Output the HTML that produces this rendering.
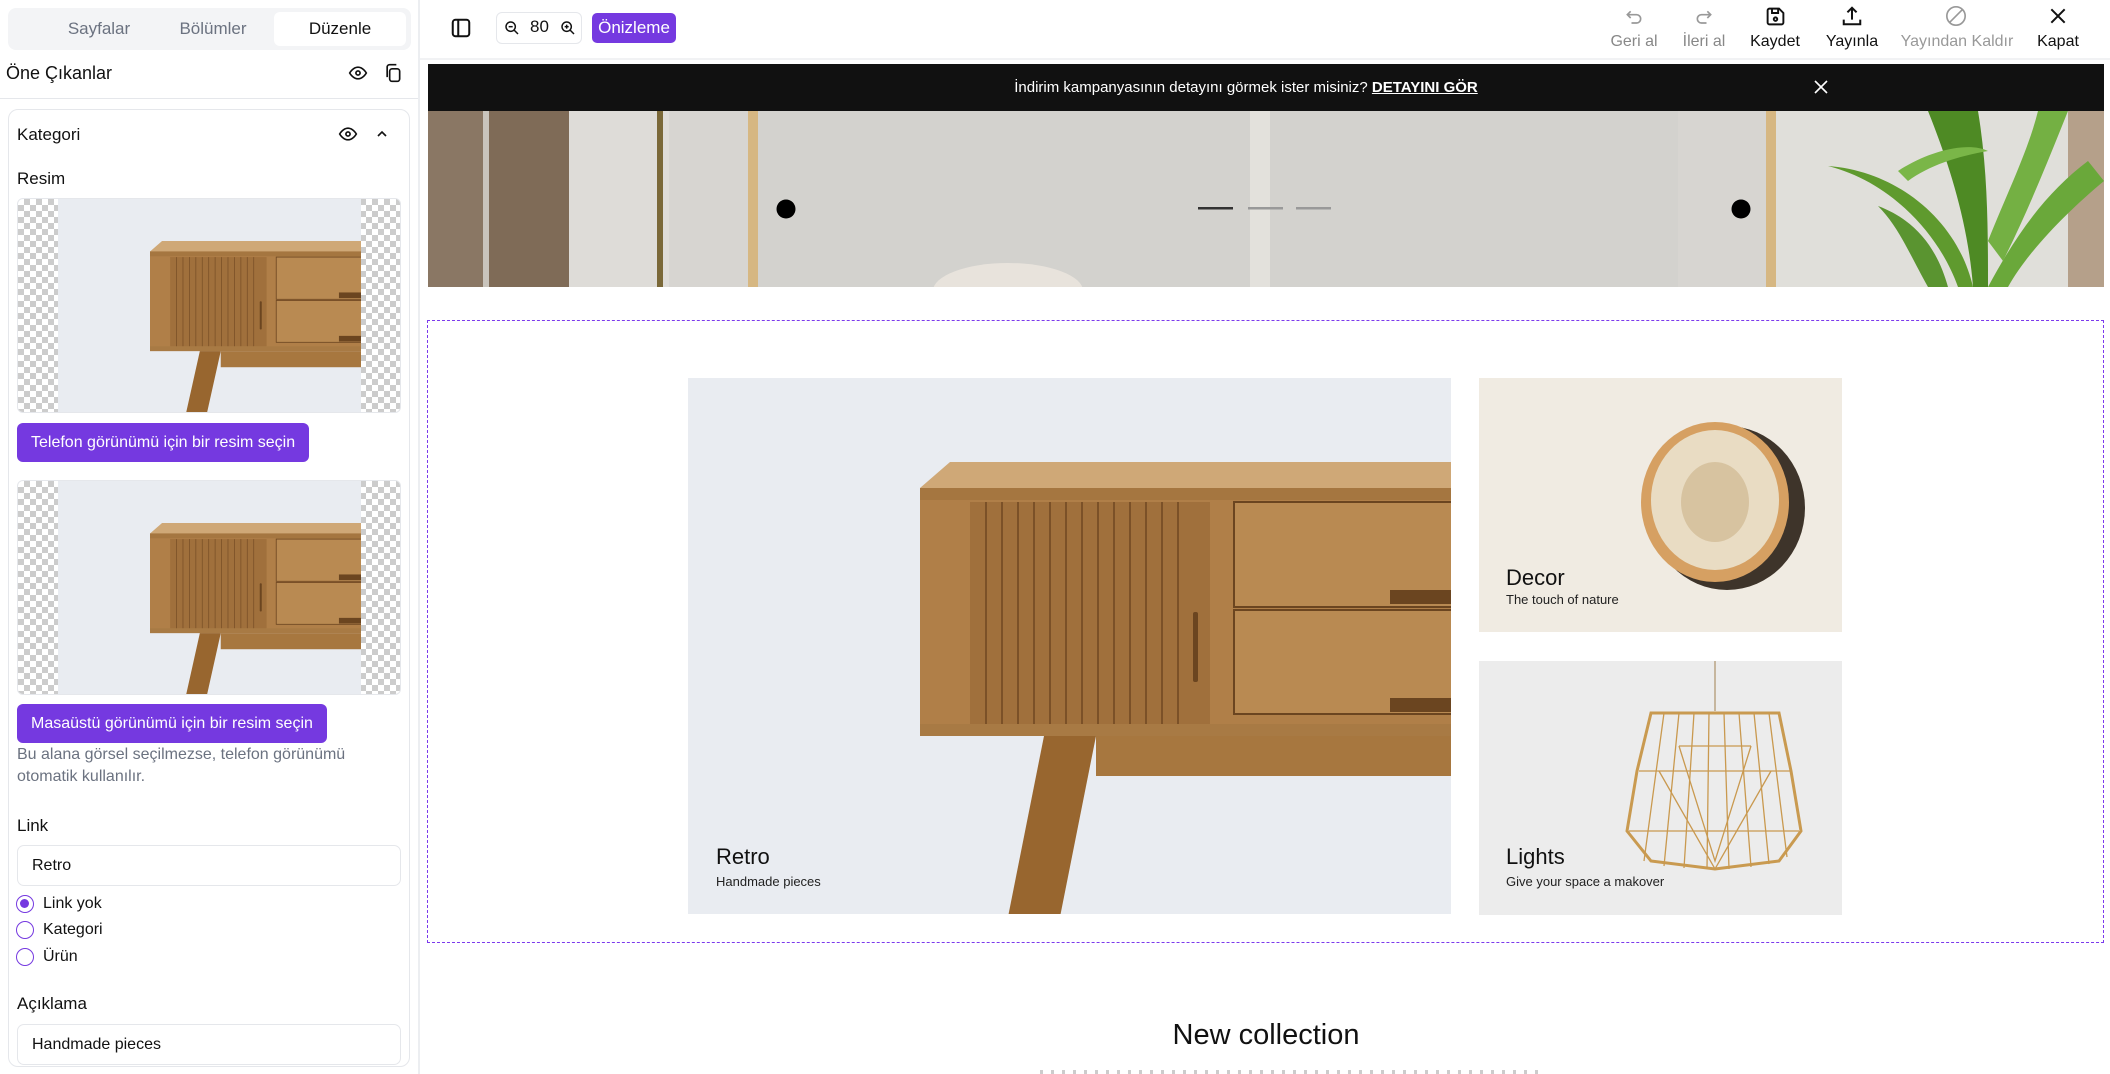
<!DOCTYPE html>
<html style="overflow:hidden;width:2110px;height:1074px"><head><meta charset="utf-8">
<style>
*{box-sizing:border-box;margin:0;padding:0}
body{width:2110px;height:1074px;overflow:hidden;background:#fff;font-family:"Liberation Sans",sans-serif;color:#111;position:relative}
.abs{position:absolute}
.side{left:0;top:0;width:420px;height:1074px;border-right:2px solid #eceef1;background:#fff;overflow:hidden}
.tabs{left:8px;top:8px;width:403px;height:42px;background:#f3f4f6;border-radius:8px}
.tab{position:absolute;top:4px;height:34px;line-height:34px;text-align:center;font-size:17px;color:#6b7280;width:130px}
.card{left:8px;top:109px;width:402px;height:958px;border:1px solid #e5e7eb;border-radius:10px}
.lbl{font-size:17px;color:#111}
.thumb{left:17px;width:384px;height:215px;border-radius:6px;overflow:hidden;border:1px solid #e5e7eb;
background-color:#fff;background-image:linear-gradient(45deg,#ccc 25%,transparent 25%,transparent 75%,#ccc 75%),linear-gradient(45deg,#ccc 25%,transparent 25%,transparent 75%,#ccc 75%);background-size:12px 12px;background-position:0 0,6px 6px}
.thumb .mid{position:absolute;left:40px;top:0;width:303px;height:100%;background:#e9ecf1;overflow:hidden}
.btn{background:#7539e0;color:#fff;font-size:16px;border-radius:6px;height:39px;line-height:39px;padding:0 14px;left:17px}
.inp{left:17px;width:384px;height:41px;border:1px solid #e5e7eb;border-radius:7px;font-size:16px;line-height:39px;padding-left:14px}
.radio{left:16px;width:18px;height:18px;border:1.5px solid #7539e0;border-radius:50%}
.rl{left:43px;font-size:16px}
.tb{font-size:16px;text-align:center;width:120px}
.top{left:420px;top:0;width:1690px;height:60px;border-bottom:2px solid #f1f2f4}
</style></head><body>
<div class="abs side">
  <div class="abs tabs">
    <div class="tab" style="left:26px">Sayfalar</div>
    <div class="tab" style="left:140px">Bölümler</div>
    <div class="tab" style="left:266px;background:#fff;border-radius:6px;color:#111;width:132px">Düzenle</div>
  </div>
  <div class="abs" style="left:6px;top:60px;font-size:18px;line-height:26px">Öne Çıkanlar</div>
  <svg class="abs" style="left:348px;top:63px" width="20" height="20" viewBox="0 0 24 24" fill="none" stroke="#111" stroke-width="2"><path d="M2 12s4-7 10-7 10 7 10 7-4 7-10 7S2 12 2 12z"/><circle cx="12" cy="12" r="2.5"/></svg>
  <svg class="abs" style="left:383px;top:62px" width="20" height="22" viewBox="0 0 24 24" fill="none" stroke="#111" stroke-width="2"><rect x="8" y="7" width="12" height="15" rx="3"/><path d="M5 17V5a3 3 0 0 1 3-3h8"/></svg>
  <div class="abs" style="left:0;top:98px;width:418px;height:1px;background:#e5e7eb"></div>
  <div class="abs card"></div>
  <div class="abs lbl" style="left:17px;top:125px">Kategori</div>
  <svg class="abs" style="left:338px;top:124px" width="20" height="20" viewBox="0 0 24 24" fill="none" stroke="#111" stroke-width="2"><path d="M2 12s4-7 10-7 10 7 10 7-4 7-10 7S2 12 2 12z"/><circle cx="12" cy="12" r="2.5"/></svg>
  <svg class="abs" style="left:374px;top:126px" width="16" height="16" viewBox="0 0 24 24" fill="none" stroke="#111" stroke-width="2.5"><path d="M6 15l6-6 6 6"/></svg>
  <div class="abs lbl" style="left:17px;top:169px">Resim</div>
  <div class="abs thumb" style="top:198px"><div class="mid">
    <svg width="303" height="215" viewBox="0 0 303 215"><g transform="translate(92,42) scale(0.402)"><use href="#sb"/><polygon points="124,274 176,274 139,440 87,440" fill="#98662f"/></g></svg></div></div>
  <div class="abs btn" style="top:423px">Telefon görünümü için bir resim seçin</div>
  <div class="abs thumb" style="top:480px"><div class="mid">
    <svg width="303" height="215" viewBox="0 0 303 215"><g transform="translate(92,42) scale(0.402)"><use href="#sb"/><polygon points="124,274 176,274 139,440 87,440" fill="#98662f"/></g></svg></div></div>
  <div class="abs btn" style="top:704px">Masaüstü görünümü için bir resim seçin</div>
  <div class="abs" style="left:17px;top:744px;font-size:16px;line-height:22px;color:#6b7280;width:360px">Bu alana görsel seçilmezse, telefon görünümü otomatik kullanılır.</div>
  <div class="abs lbl" style="left:17px;top:816px">Link</div>
  <div class="abs inp" style="top:845px">Retro</div>
  <div class="abs radio" style="top:895px"><div style="position:absolute;left:3px;top:3px;width:9px;height:9px;border-radius:50%;background:#7539e0"></div></div>
  <div class="abs rl" style="top:895px">Link yok</div>
  <div class="abs radio" style="top:921px"></div><div class="abs rl" style="top:921px">Kategori</div>
  <div class="abs radio" style="top:948px"></div><div class="abs rl" style="top:948px">Ürün</div>
  <div class="abs lbl" style="left:17px;top:994px">Açıklama</div>
  <div class="abs inp" style="top:1024px">Handmade pieces</div>
</div>

<svg width="0" height="0" style="position:absolute"><defs>
<g id="sb">
  <polygon points="0,26 30,0 540,0 540,26" fill="#cfa877"/>
  <rect x="0" y="26" width="540" height="246" fill="#b07f48"/>
  <rect x="0" y="26" width="540" height="12" fill="#a57640"/>
  <rect x="50" y="40" width="240" height="222" fill="#a0703c"/>
  <g stroke="#7b5128" stroke-width="2">
    <line x1="66" y1="40" x2="66" y2="262"/><line x1="82" y1="40" x2="82" y2="262"/><line x1="98" y1="40" x2="98" y2="262"/><line x1="114" y1="40" x2="114" y2="262"/><line x1="130" y1="40" x2="130" y2="262"/><line x1="146" y1="40" x2="146" y2="262"/><line x1="162" y1="40" x2="162" y2="262"/><line x1="178" y1="40" x2="178" y2="262"/><line x1="194" y1="40" x2="194" y2="262"/><line x1="210" y1="40" x2="210" y2="262"/><line x1="226" y1="40" x2="226" y2="262"/><line x1="242" y1="40" x2="242" y2="262"/><line x1="258" y1="40" x2="258" y2="262"/>
  </g>
  <rect x="273" y="150" width="5" height="70" rx="2" fill="#6b4520"/>
  <rect x="314" y="40" width="226" height="105" fill="#b98a52" stroke="#6b4520" stroke-width="2"/>
  <rect x="314" y="148" width="226" height="104" fill="#b98a52" stroke="#6b4520" stroke-width="2"/>
  <rect x="470" y="128" width="70" height="14" fill="#6b4520"/>
  <rect x="470" y="236" width="70" height="14" fill="#6b4520"/>
  <rect x="0" y="262" width="540" height="12" fill="#a87a44"/>
  <rect x="176" y="274" width="364" height="40" fill="#a7773f"/>
</g>
</defs></svg>

<div class="abs top">
  <svg class="abs" style="left:30px;top:17px" width="22" height="22" viewBox="0 0 24 24" fill="none" stroke="#111" stroke-width="2.2"><rect x="3" y="3" width="18" height="18" rx="3"/><line x1="9" y1="3" x2="9" y2="21"/></svg>
  <div class="abs" style="left:76px;top:12px;width:86px;height:32px;border:1px solid #e5e7eb;border-radius:6px"></div>
  <svg class="abs" style="left:84px;top:20px" width="16" height="16" viewBox="0 0 24 24" fill="none" stroke="#111" stroke-width="2.2"><circle cx="10" cy="10" r="7"/><line x1="15" y1="15" x2="21" y2="21"/><line x1="7" y1="10" x2="13" y2="10"/></svg>
  <div class="abs" style="left:110px;top:17px;font-size:17px">80</div>
  <svg class="abs" style="left:140px;top:20px" width="16" height="16" viewBox="0 0 24 24" fill="none" stroke="#111" stroke-width="2.2"><circle cx="10" cy="10" r="7"/><line x1="15" y1="15" x2="21" y2="21"/><line x1="7" y1="10" x2="13" y2="10"/><line x1="10" y1="7" x2="10" y2="13"/></svg>
  <div class="abs" style="left:172px;top:13px;width:84px;height:30px;background:#7539e0;border-radius:5px;color:#fff;font-size:17px;line-height:30px;text-align:center">Önizleme</div>
</div>
<!-- right toolbar -->
<svg class="abs" style="left:1624px;top:8px" width="20" height="20" viewBox="0 0 24 24" fill="none" stroke="#999" stroke-width="2"><path d="M8 4L4 8l4 4"/><path d="M4 8h11a5 5 0 0 1 0 10H9"/></svg>
<div class="abs tb" style="left:1574px;top:33px;color:#888">Geri al</div>
<svg class="abs" style="left:1694px;top:8px" width="20" height="20" viewBox="0 0 24 24" fill="none" stroke="#999" stroke-width="2"><path d="M16 4l4 4-4 4"/><path d="M20 8H9a5 5 0 0 0 0 10h6"/></svg>
<div class="abs tb" style="left:1644px;top:33px;color:#888">İleri al</div>
<svg class="abs" style="left:1765px;top:6px" width="21" height="21" viewBox="0 0 24 24" fill="none" stroke="#111" stroke-width="2.2"><path d="M5 3h11l5 5v11a2 2 0 0 1-2 2H5a2 2 0 0 1-2-2V5a2 2 0 0 1 2-2z"/><path d="M8 3v5h7V3"/><circle cx="12" cy="15" r="2"/></svg>
<div class="abs tb" style="left:1715px;top:33px">Kaydet</div>
<svg class="abs" style="left:1841px;top:5px" width="22" height="22" viewBox="0 0 24 24" fill="none" stroke="#111" stroke-width="2.2"><path d="M12 16V3M7 8l5-5 5 5"/><path d="M3 16v5h18v-5"/></svg>
<div class="abs tb" style="left:1792px;top:33px">Yayınla</div>
<svg class="abs" style="left:1945px;top:5px" width="22" height="22" viewBox="0 0 24 24" fill="none" stroke="#999" stroke-width="1.8"><circle cx="12" cy="12" r="10"/><line x1="5" y1="19" x2="19" y2="5"/></svg>
<div class="abs tb" style="left:1887px;top:33px;width:140px;color:#999">Yayından Kaldır</div>
<svg class="abs" style="left:2048px;top:6px" width="20" height="20" viewBox="0 0 24 24" fill="none" stroke="#111" stroke-width="2.4"><path d="M4 4l16 16M20 4L4 20"/></svg>
<div class="abs tb" style="left:1998px;top:33px">Kapat</div>

<!-- announcement -->
<div class="abs" style="left:428px;top:64px;width:1676px;height:47px;background:#111;color:#fff;font-size:15px;line-height:47px;text-align:center">
  <span style="position:relative;left:-20px">İndirim kampanyasının detayını görmek ister misiniz? <b style="text-decoration:underline">DETAYINI GÖR</b></span>
</div>
<svg class="abs" style="left:1814px;top:80px" width="14" height="14" viewBox="0 0 14 14" stroke="#fff" stroke-width="1.6"><path d="M1 1l12 12M13 1L1 13"/></svg>

<!-- hero -->
<svg class="abs" style="left:428px;top:111px" width="1676" height="176" viewBox="0 0 1676 176">
  <rect width="1676" height="176" fill="#d7d5d1"/>
  <rect x="0" width="55" height="176" fill="#8a7764"/>
  <rect x="55" width="6" height="176" fill="#c9c4bc"/>
  <rect x="61" width="80" height="176" fill="#7f6b57"/>
  <rect x="141" width="100" height="176" fill="#dedcd8"/>
  <rect x="229" width="6" height="176" fill="#7a6838"/>
  <rect x="320" width="10" height="176" fill="#d6b782"/>
  <rect x="330" width="920" height="176" fill="#d3d2ce"/>
  <rect x="822" width="20" height="176" fill="#e3e1dc"/>
  <rect x="1338" width="10" height="176" fill="#d6b782"/>
  <rect x="1348" width="328" height="176" fill="#e0dfda"/>
  <rect x="1640" width="36" height="176" fill="#b5a08a"/>
  <ellipse cx="580" cy="180" rx="75" ry="28" fill="#e8e3dc"/>
  <g>
    <path d="M1530 176 C1510 120 1460 70 1400 55 C1470 60 1530 110 1545 176z" fill="#5f9a2e"/>
    <path d="M1545 176 C1540 110 1520 50 1500 0 L1550 0 C1560 60 1560 120 1560 176z" fill="#4e8a24"/>
    <path d="M1560 176 C1590 120 1620 80 1660 50 L1676 70 C1640 100 1600 140 1580 176z" fill="#6aa83a"/>
    <path d="M1560 130 C1580 80 1600 40 1610 0 L1640 0 C1620 50 1600 100 1575 150z" fill="#74b043"/>
    <path d="M1500 176 C1480 140 1470 115 1450 95 C1490 110 1510 140 1520 176z" fill="#5a9430"/>
    <path d="M1470 60 C1500 40 1540 30 1560 40 C1530 45 1500 55 1480 70z" fill="#7ab648"/>
  </g>
  <circle cx="358" cy="98" r="9.5" fill="#000"/>
  <circle cx="1313" cy="98" r="9.5" fill="#000"/>
  <rect x="770" y="96" width="35" height="2.5" fill="#333"/>
  <rect x="820" y="96" width="35" height="2.5" fill="#999"/>
  <rect x="868" y="96" width="35" height="2.5" fill="#999"/>
</svg>

<!-- selected section -->
<div class="abs" style="left:427px;top:320px;width:1677px;height:623px;border:1.5px dashed #7c3aed"></div>
<div class="abs" style="left:688px;top:378px;width:763px;height:536px;background:#e9ecf1;overflow:hidden">
  <svg width="763" height="536" viewBox="0 0 763 536"><g transform="translate(232,84)"><use href="#sb"/><polygon points="124,274 176,274 139,460 87,460" fill="#98662f"/></g></svg>
  <div class="abs" style="left:28px;top:466px;font-size:22px">Retro</div>
  <div class="abs" style="left:28px;top:496px;font-size:13px;color:#222">Handmade pieces</div>
</div>
<div class="abs" style="left:1479px;top:378px;width:363px;height:254px;background:#f0ebe2;overflow:hidden">
  <svg width="363" height="254"><ellipse cx="248" cy="130" rx="78" ry="82" fill="#3e342a"/><ellipse cx="236" cy="124" rx="74" ry="80" fill="#d6a062"/><ellipse cx="236" cy="122" rx="64" ry="70" fill="#e9dcc3"/><ellipse cx="236" cy="124" rx="34" ry="40" fill="#d7c3a0"/></svg>
  <div class="abs" style="left:27px;top:187px;font-size:22px">Decor</div>
  <div class="abs" style="left:27px;top:214px;font-size:13px;color:#222">The touch of nature</div>
</div>
<div class="abs" style="left:1479px;top:661px;width:363px;height:254px;background:#ececec;overflow:hidden">
  <svg width="363" height="254"><line x1="236" y1="0" x2="236" y2="50" stroke="#a08050"/>
  <path d="M172 52 L300 52 L312 110 L322 170 L300 200 L236 208 L172 200 L148 170 L158 110 Z" fill="none" stroke="#c99a50" stroke-width="3"/>
  <g stroke="#c9994f" stroke-width="1.3" fill="none">
    <path d="M185 52 L165 200 M200 52 L185 205 M215 52 L205 207 M230 52 L228 208 M245 52 L250 208 M260 52 L272 206 M275 52 L290 203 M290 52 L308 196"/>
    <path d="M160 110 L312 110 M150 170 L320 170 M200 85 L272 85"/>
    <path d="M180 110 L236 208 L292 110 M200 85 L236 200 L272 85"/>
  </g></svg>
  <div class="abs" style="left:27px;top:183px;font-size:22px">Lights</div>
  <div class="abs" style="left:27px;top:213px;font-size:13px;color:#222">Give your space a makover</div>
</div>

<div class="abs" style="left:428px;top:1019px;width:1676px;text-align:center;font-size:29px;color:#111">New collection</div>
<div class="abs" style="left:1040px;top:1070px;width:500px;height:4px;background:repeating-linear-gradient(90deg,#ccc 0 3px,transparent 3px 11px)"></div>
</body></html>
